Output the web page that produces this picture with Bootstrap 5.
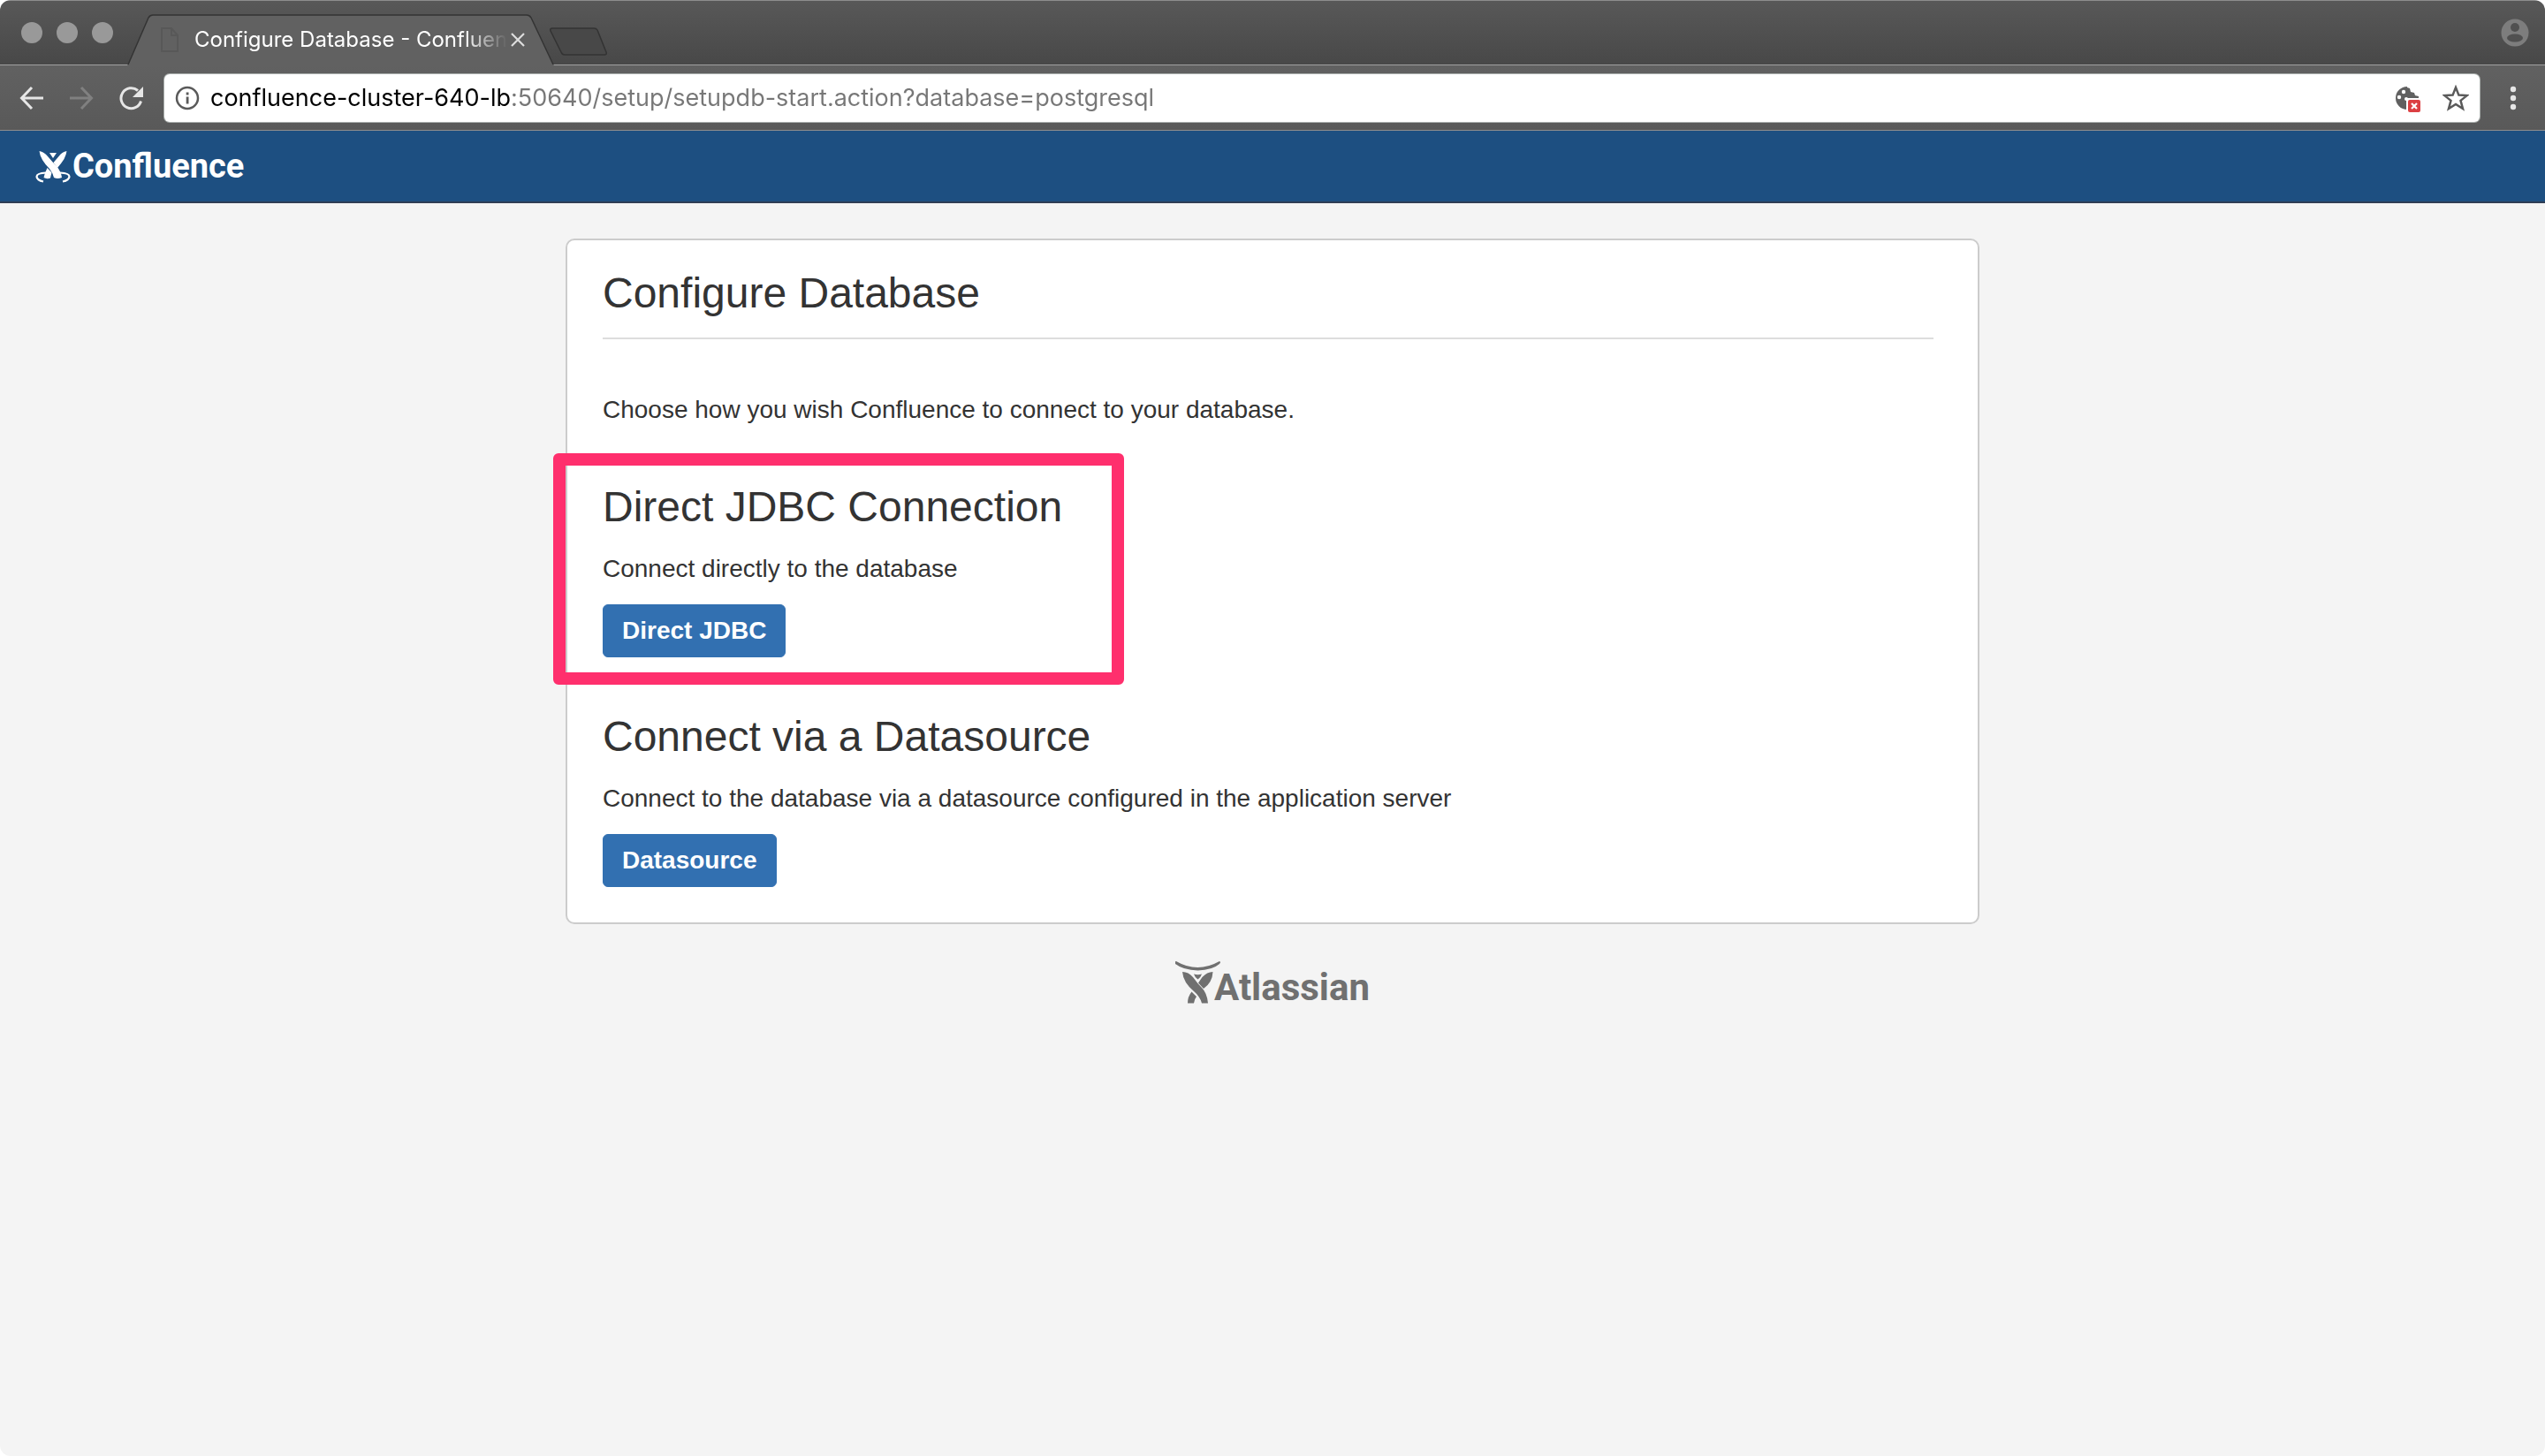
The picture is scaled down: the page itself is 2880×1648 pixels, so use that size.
<!DOCTYPE html>
<html lang="en">
<head>
<meta charset="utf-8">
<meta name="viewport" content="width=device-width, initial-scale=1">
<title>Configure Database - Confluence</title>
<link href="https://cdn.jsdelivr.net/npm/bootstrap@5.3.0/dist/css/bootstrap.min.css" rel="stylesheet">
<style>
html { background: #fff; }
body { font-family: "Liberation Sans", Arial, sans-serif; font-size: 28px; line-height: 40px; color: #333; background: #fff; }
.window { min-height: 100vh; background: #f4f4f4; border-radius: 12px; overflow: hidden; }
svg { display: block; flex: none; }
.plain { background: none; border: 0; padding: 0; }

.tabstrip { height: 74px; padding: 0 18px 0 24px; background: linear-gradient(#585858, #484848); border-top: 1px solid #8d8d8d; border-bottom: 1px solid #a0a0a0; font-family: Inter, sans-serif; }
.lights { gap: 16px; margin-right: 16px; }
.light { width: 24px; height: 24px; border-radius: 50%; background: #999; }
.tab { width: 484px; height: 58px; margin-bottom: -1px; }
.tab-shape { position: absolute; inset: 0; }
.tab-body { position: relative; height: 100%; padding: 0 34px 0 38px; }
.tab-title { margin-left: 18px; font-size: 24px; line-height: 32px; color: #fff; white-space: nowrap; -webkit-mask-image: linear-gradient(90deg, #000 86%, transparent); mask-image: linear-gradient(90deg, #000 86%, transparent); }
.new-tab { margin: 20px 0 0 -6px; }

.toolbar { height: 74px; padding: 0 24px 0 22px; background: linear-gradient(#616161, #595959); border-bottom: 1px solid #8d8d8d; }
.omnibox { height: 54px; margin: 0 26px 0 22px; padding: 0 12px; background: #fff; border-radius: 6px; box-shadow: 0 0 0 1px #a8adab; }
.address { border: 0; outline: 0; padding: 0; margin-left: 12px; height: 40px; font-family: Inter, sans-serif; font-size: 27px; line-height: 40px; color: #777; background: linear-gradient(90deg, #000 342px, #777 342px); -webkit-background-clip: text; background-clip: text; -webkit-text-fill-color: transparent; }

.app-header { height: 82px; padding: 0 40px; background: #1d4f81; border-bottom: 2px solid #2e3d54; }
.brand { gap: 2px; font-family: Roboto, sans-serif; font-weight: 700; color: #fff; font-size: 38px; line-height: 44px; text-decoration: none; }
.panel { max-width: 1600px; margin: 40px auto 0; padding: 30px 50px 40px 40px; background: #fff; border: 2px solid #ccc; border-radius: 10px; }
.panel h1, .panel h2 { font-size: 48px; line-height: 60px; font-weight: 400; margin: 0; }
.panel h1 { padding-bottom: 20px; border-bottom: 2px solid #ddd; }
.intro { margin: 60px 0 0; }
.choice { position: relative; margin-top: 60px; }
.choice p { margin: 20px 0; }
.highlight { position: absolute; top: -31px; bottom: -31px; left: -56px; width: 646px; border: 14px solid #ff2f6d; border-radius: 6px; pointer-events: none; }
.btn-setup { --bs-btn-bg: #3270b1; --bs-btn-color: #fff; --bs-btn-border-color: #3270b1; --bs-btn-hover-bg: #285f9a; --bs-btn-hover-color: #fff; height: 60px; padding: 0 21px; border-radius: 6px; font-size: 28px; line-height: 40px; font-weight: 700; display: block; }
.vendor { margin-top: 40px; }
.vendor a { color: #707070; font-size: 42px; line-height: 36px; gap: 0; }
.vendor svg { margin-right: -8px; }
</style>
</head>
<body>
<div class="window">
  <div class="tabstrip d-flex align-items-center">
    <div class="lights d-flex">
      <span class="light"></span><span class="light"></span><span class="light"></span>
    </div>
    <div class="tab position-relative align-self-end">
      <svg class="tab-shape" width="484" height="58" viewBox="0 0 484 58"><path d="M0 58 L24 4 Q26 1 29 1 H452 Q455 1 457 4 L483 58Z" fill="#616161"/><path d="M1 57 L24 4 Q26 1 29 1 H452 Q455 1 457 4 L482 57" fill="none" stroke="#333" stroke-width="1.5"/></svg>
      <div class="tab-body d-flex align-items-center">
        <svg width="20" height="28" viewBox="0 0 20 28" fill="none" stroke="#585858" stroke-width="2"><path d="M1 1h11l7 8v18H1zM12 1v8h7"/></svg>
        <span class="tab-title">Configure Database - Confluen</span>
        <button class="plain ms-auto" aria-label="Close tab"><svg width="16" height="16" viewBox="0 0 16 16" stroke="#ddd" stroke-width="2.2"><path d="M1 1l14 14M15 1L1 15"/></svg></button>
      </div>
    </div>
    <button class="plain new-tab" aria-label="New tab"><svg width="66" height="32" viewBox="0 0 66 32"><path d="M3 1h47q3 0 4 2l10 25q1 3-2 3H17q-3 0-4-3L1 4q-1-3 2-3z" fill="#484848" stroke="#333" stroke-width="1.5"/></svg></button>
    <button class="plain ms-auto" aria-label="Profile"><svg width="32" height="32" viewBox="0 0 32 32"><circle cx="16" cy="16" r="15.500" fill="#7d7d7d"/><circle cx="16" cy="10" r="5" fill="#505050"/><ellipse cx="16" cy="22" rx="9" ry="4.500" fill="#505050"/></svg></button>
  </div>

  <div class="toolbar d-flex align-items-center">
    <button class="plain" aria-label="Back"><svg width="28" height="28" viewBox="0 0 28 28" fill="none" stroke="#e6e6e6" stroke-width="3"><path d="M27 14H3M14 2L2.500 14L14 26"/></svg></button>
    <button class="plain ms-4 ps-1" aria-label="Forward"><svg width="28" height="28" viewBox="0 0 28 28" fill="none" stroke="#808080" stroke-width="3"><path d="M1 14h24M14 2l11.500 12L14 26"/></svg></button>
    <button class="plain ms-4 ps-1" aria-label="Reload"><svg width="30" height="28" viewBox="0 0 30 28"><path d="M25.500 17.500A11.500 11.500 0 1 1 22 5.500" fill="none" stroke="#e6e6e6" stroke-width="3"/><path d="M28 1v12H16z" fill="#e6e6e6"/></svg></button>
    <div class="omnibox flex-grow-1 d-flex align-items-center">
      <svg width="28" height="28" viewBox="0 0 28 28"><circle cx="14" cy="14" r="12" fill="none" stroke="#5a5a5a" stroke-width="2.500"/><path d="M12.700 12.500h2.800v8h-2.800zM12.700 7.500h2.800v3h-2.800z" fill="#5a5a5a"/></svg>
      <input class="address flex-grow-1" type="text" aria-label="Address" value="confluence-cluster-640-lb:50640/setup/setupdb-start.action?database=postgresql">
      <svg width="32" height="32" viewBox="0 0 32 32"><path d="M16 3a13 13 0 1 0 0 26l2-1V16h11v-2l-4-1-1-3-4-1-1-4-3-1z" fill="#606060"/><g fill="#fff"><circle cx="12" cy="9" r="2.200"/><circle cx="7" cy="15" r="2.200"/><circle cx="15" cy="17" r="2"/><path d="M15 16h17v16H15z"/></g><rect x="17" y="18" width="14" height="14" rx="2" fill="#dc4043"/><path d="M21 22l6 6M27 22l-6 6" stroke="#fff" stroke-width="2.200"/></svg>
      <button class="plain ms-4" aria-label="Bookmark this page"><svg width="30" height="30" viewBox="0 0 30 30"><path d="M15 3l3.400 8.600 9.300.5-7.200 5.800 2.500 9.100L15 22l-8 5 2.500-9.100-7.200-5.800 9.300-.5z" fill="none" stroke="#5a5a5a" stroke-width="2.500"/></svg></button>
    </div>
    <button class="plain" aria-label="Menu"><svg width="24" height="28" viewBox="0 0 24 28" fill="#e6e6e6"><circle cx="12" cy="4" r="3.200"/><circle cx="12" cy="14" r="3.200"/><circle cx="12" cy="24" r="3.200"/></svg></button>
  </div>

  <header class="app-header d-flex align-items-center">
    <a class="brand d-flex align-items-center" href="#">
      <svg width="40" height="38" viewBox="0 0 40 38" fill="#fff"><path d="M4.500 2Q10 3 14 8Q19 14 24 19Q29 25 30 32Q25 34 21 32Q20 27 16 22Q11 17 8 12Q5 7 4.500 2z"/><path d="M35.500 2Q30 3 26.500 8L20.500 15L25 21Q30 15 32.500 11Q35 6 35.500 2zM16 4h8L20 10zM13.500 21L18.500 26.500Q17.500 30 17 32.500Q13 34 9.500 32Q10.500 27 13.500 21z"/><path d="M12 26.500Q1.500 27 1.500 31Q2 35 9 36.500M28 26.500Q38.500 27 38.500 31Q38 35 31 36.500" fill="none" stroke="#fff" stroke-width="2.200"/></svg>
      <span>Confluence</span>
    </a>
  </header>

  <main class="panel">
    <h1>Configure Database</h1>
    <p class="intro">Choose how you wish Confluence to connect to your database.</p>
    <section class="choice">
      <h2>Direct JDBC Connection</h2>
      <p>Connect directly to the database</p>
      <button class="btn btn-setup" type="button">Direct JDBC</button>
      <div class="highlight"></div>
    </section>
    <section class="choice">
      <h2>Connect via a Datasource</h2>
      <p>Connect to the database via a datasource configured in the application server</p>
      <button class="btn btn-setup" type="button">Datasource</button>
    </section>
  </main>

  <footer class="vendor d-flex justify-content-center">
    <a class="brand d-flex align-items-end" href="#">
      <svg width="52" height="50" viewBox="0 0 52 50" fill="#707070"><path d="M1 2Q25 16 50 2Q52 3 50 5Q42 12 25.500 12.500Q9 12 0 5Q-1 2 1 2z"/><path d="M8 14Q15 14 20 20Q25 27 30 32Q36 38 37 49.500H30Q28 42 21 36Q9 26 8 14z"/><path d="M42.500 14Q36 14 30.500 20L26 26.500L32 33Q42 26 42.500 14zM21 16.500Q25.500 18 30 16.500Q29 20 25.500 22.500Q22 20 21 16.500zM18.500 36.500L24 42Q21.500 45 21 49.500H14Q14 42 18.500 36.500z"/></svg>
      <span>Atlassian</span>
    </a>
  </footer>
</div>
<script src="https://cdn.jsdelivr.net/npm/bootstrap@5.3.0/dist/js/bootstrap.bundle.min.js"></script>
</body>
</html>
